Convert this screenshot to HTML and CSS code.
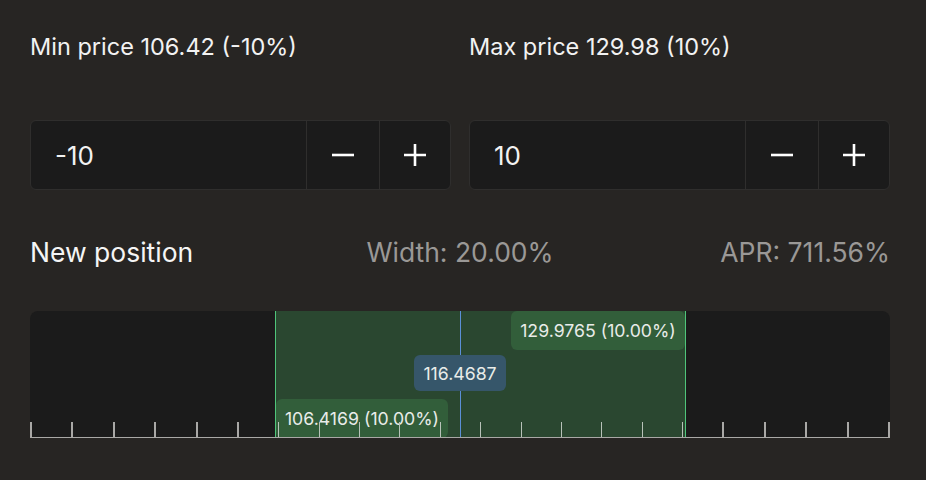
FILE: index.html
```html
<!DOCTYPE html>
<html>
<head>
<meta charset="utf-8">
<link rel="stylesheet" href="styles.css">
</head>
<body>
<div class="page">
  <div class="cols">
    <div class="col">
      <div class="label">Min price 106.42 (-10%)</div>
      <div class="stepper">
        <div class="value">-10</div>
        <div class="btn btn-minus"><svg width="24" height="24" viewBox="0 0 24 24"><path d="M1 12H23" stroke="#fff" stroke-width="2.6"/></svg></div>
        <div class="btn btn-plus"><svg width="24" height="24" viewBox="0 0 24 24"><path d="M1 12H23M12 1V23" stroke="#fff" stroke-width="2.6"/></svg></div>
      </div>
    </div>
    <div class="col">
      <div class="label">Max price 129.98 (10%)</div>
      <div class="stepper">
        <div class="value">10</div>
        <div class="btn btn-minus"><svg width="24" height="24" viewBox="0 0 24 24"><path d="M1 12H23" stroke="#fff" stroke-width="2.6"/></svg></div>
        <div class="btn btn-plus"><svg width="24" height="24" viewBox="0 0 24 24"><path d="M1 12H23M12 1V23" stroke="#fff" stroke-width="2.6"/></svg></div>
      </div>
    </div>
  </div>
  <div class="summary">
    <div class="title">New position</div>
    <div class="muted">Width: 20.00%</div>
    <div class="muted">APR: 711.56%</div>
  </div>
  <div class="chart">
    <div class="range"></div>
    <div class="edge edge-l"></div>
    <div class="edge edge-r"></div>
    <div class="current"></div>
    <div class="tag tag-high">129.9765 (10.00%)</div>
    <div class="tag tag-cur">116.4687</div>
    <div class="tag tag-low">106.4169 (10.00%)</div>
    <div class="ticks">
      <span class="tick"></span><span class="tick"></span><span class="tick"></span><span class="tick"></span><span class="tick"></span><span class="tick"></span>
      <span class="tick in"></span><span class="tick in"></span><span class="tick in"></span><span class="tick in"></span><span class="tick in"></span><span class="tick in"></span><span class="tick in"></span><span class="tick in"></span><span class="tick in"></span><span class="tick in"></span><span class="tick in"></span>
      <span class="tick"></span><span class="tick"></span><span class="tick"></span><span class="tick"></span><span class="tick"></span>
    </div>
  </div>
</div>
</body>
</html>
```
FILE: styles.css
```css
html, body {
  margin: 0;
  padding: 0;
  background: #272523;
}
body {
  font-family: Inter, "Noto Sans", sans-serif;
  color: #f2f2f2;
}
.page {
  width: 860px;
  padding: 0 36px 0 30px;
}
.cols {
  display: grid;
  grid-template-columns: 1fr 1fr;
  gap: 18px;
}
.label {
  font-size: 23.5px;
  height: 24px;
  line-height: 24px;
  margin-top: 35px;
}
.stepper {
  margin-top: 61px;
  height: 68px;
  border: 1px solid #2f2e2d;
  border-radius: 6px;
  background: #1b1b1b;
  display: flex;
}
.value {
  flex: 1;
  font-size: 26px;
  display: flex;
  align-items: center;
  padding-left: 24px;
}
.btn {
  border-left: 1px solid #2f2e2d;
  display: flex;
  align-items: center;
  justify-content: center;
}
.btn-minus { width: 72px; }
.btn-plus { width: 70px; }
.summary {
  margin-top: 46px;
  height: 32px;
  display: grid;
  grid-template-columns: 1fr auto 1fr;
  align-items: center;
  font-size: 26.5px;
}
.title { color: #f5f5f5; }
.muted { color: #9a9896; }
.summary .muted:last-child { text-align: right; }
.chart {
  margin-top: 43px;
  position: relative;
  height: 127px;
  background: #1b1b1b;
  border-radius: 8px 8px 0 0;
  font-size: 17.7px;
}
.range {
  position: absolute;
  left: 245px;
  width: 410px;
  top: 0;
  bottom: 0;
  background: #2a4730;
}
.edge {
  position: absolute;
  top: 0;
  bottom: 0;
  width: 1px;
  background: #4fc57a;
}
.edge-l { left: 245px; }
.edge-r { left: 655px; }
.current {
  position: absolute;
  left: 430px;
  top: 0;
  bottom: 0;
  width: 1px;
  background: #5b8fd8;
}
.tag {
  position: absolute;
  border-radius: 6px;
  color: #e9ece9;
  display: flex;
  align-items: center;
  justify-content: center;
}
.tag-high {
  left: 481px;
  width: 174px;
  top: 0;
  height: 39px;
  background: #325e3a;
}
.tag-cur {
  left: 384px;
  width: 92px;
  top: 44px;
  height: 36px;
  background: #36566a;
}
.tag-low {
  left: 246px;
  width: 172px;
  top: 88px;
  height: 39px;
  background: #325e3a;
}
.ticks {
  position: absolute;
  left: 0;
  right: 0;
  bottom: -1px;
  height: 15px;
  border-bottom: 2px solid #a9a8a6;
  display: flex;
  justify-content: space-between;
  align-items: flex-end;
}
.tick {
  width: 2px;
  height: 15px;
  background: #a9a8a6;
}
.tick.in {
  width: 1px;
  background: #b8c2b9;
}
```
